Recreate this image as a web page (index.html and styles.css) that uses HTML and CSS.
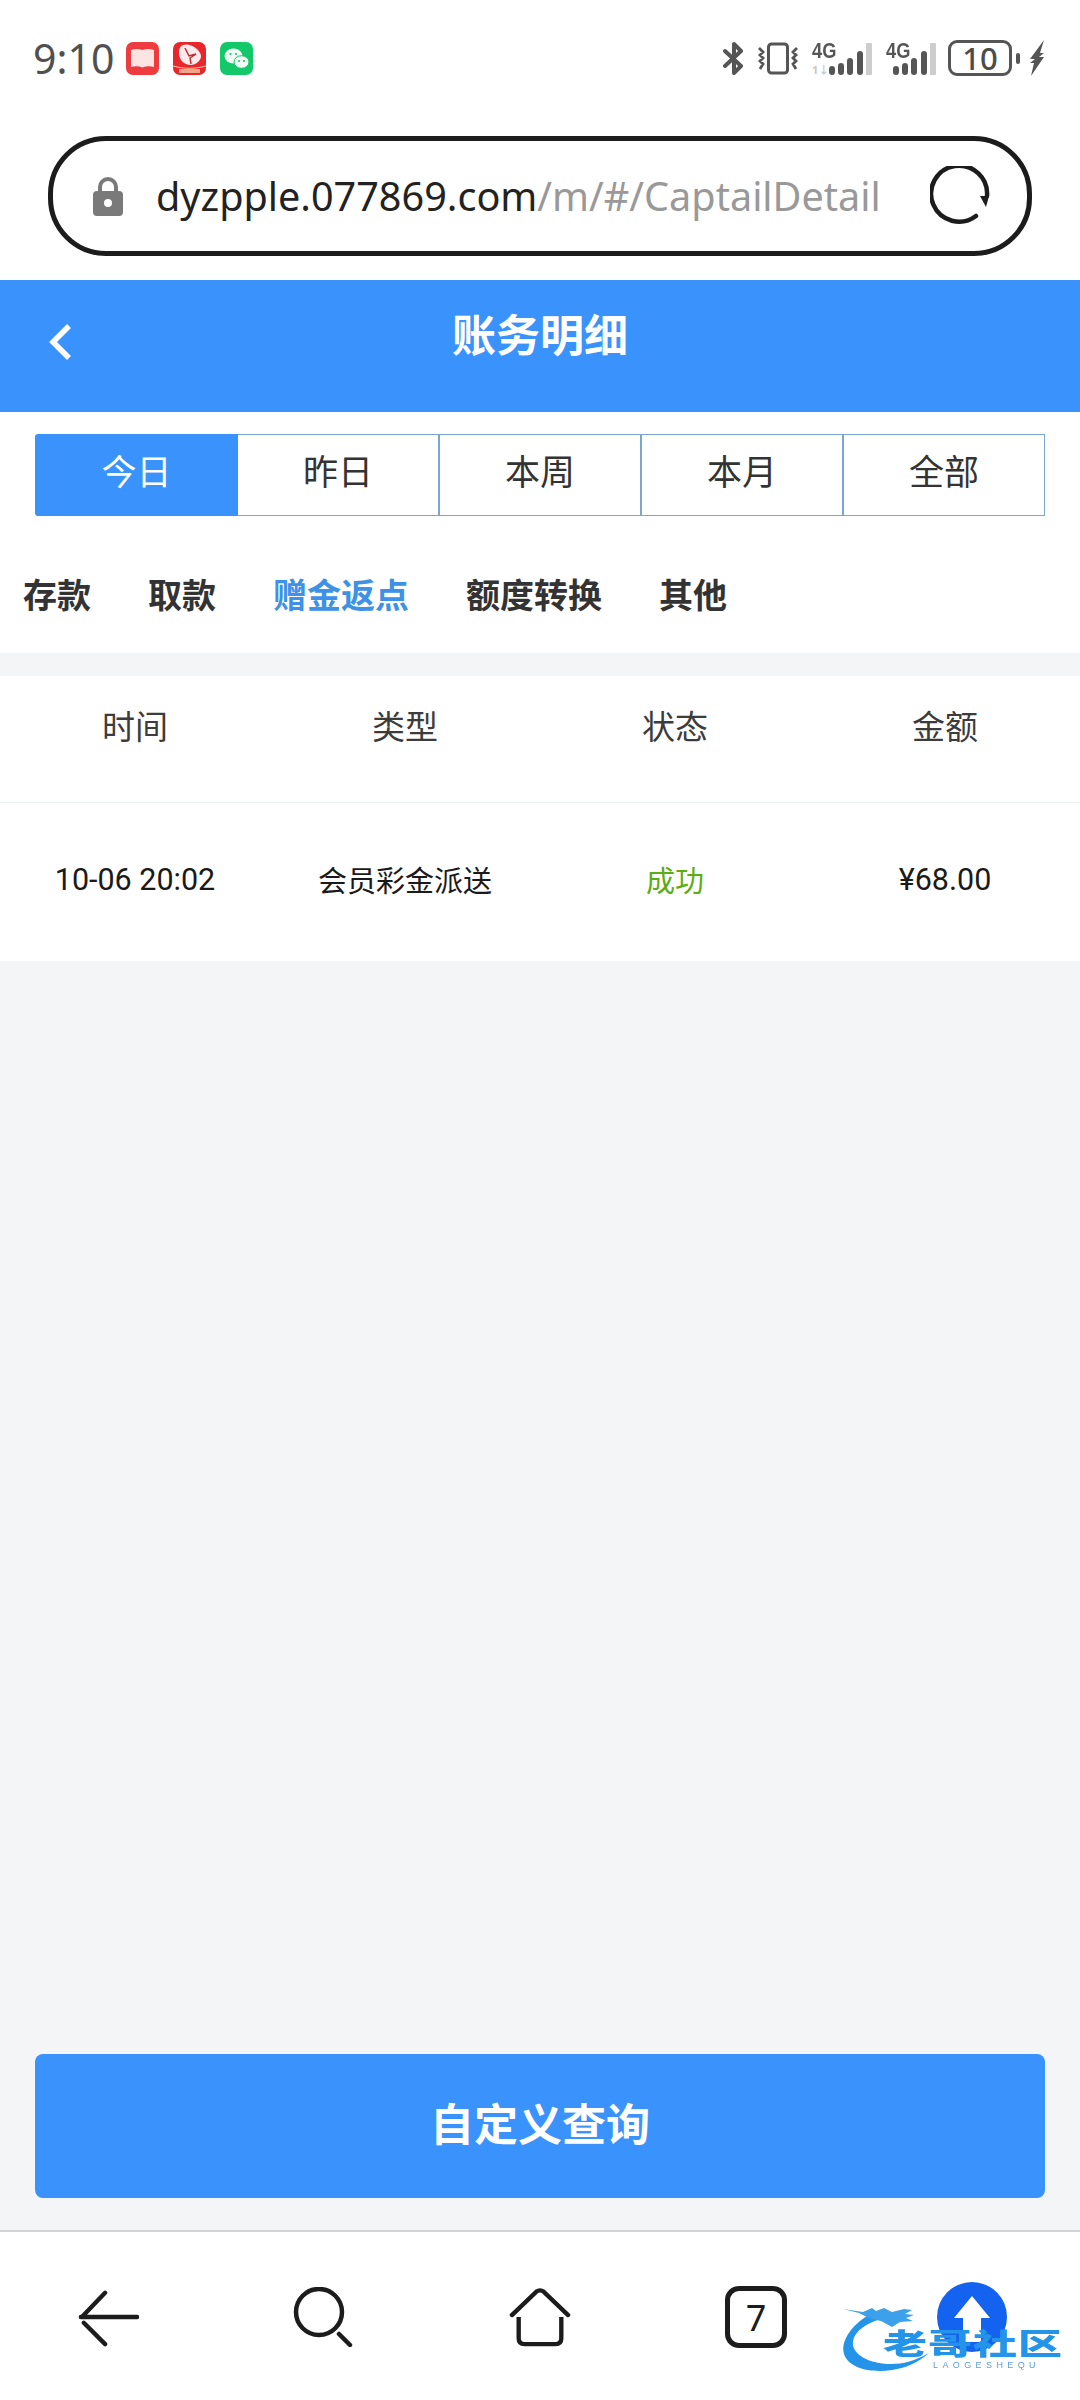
FILE: index.html
```html
<!DOCTYPE html>
<html lang="zh-Hans">
<head>
    <meta charset="UTF-8">
    <meta name="viewport" content="width=device-width, initial-scale=1.0">
    <title>账务明细</title>
    <link rel="stylesheet" href="styles.css">
</head>
<body>
    <div class="phone">
        <!-- 状态栏 -->
        <div class="statusbar">
            <div class="status-left">
                <span class="clock">9:10</span>
                <svg class="app-icon" viewBox="0 0 33 33">
                    <rect width="33" height="33" rx="7" fill="#ee3b3f"/>
                    <path d="M5 8c4-1.500 8-1.500 11.500 0 3.500-1.500 7.500-1.500 11.500 0v17c-4-1-8-1-11.500 .5C13 24 9 24 5 25z" fill="#fbe4e2"/>
                </svg>
                <svg class="app-icon" viewBox="0 0 33 33">
                    <rect width="33" height="33" rx="7" fill="#e8262c"/>
                    <path d="M10 3c6-2 14 2 17 8 2 3 1 6-2 9-3 3-8 4-12 2-5-2-7-7-7-11 0-4 1-7 4-8z" fill="#fbeaea"/>
                    <path d="M12 6l4 8 7-2-6 4 1 6" fill="none" stroke="#c8202c" stroke-width="1.400"/>
                    <path d="M0 24c11 3 22 3 33 0" fill="none" stroke="#f8c9a0" stroke-width="1"/>
                    <rect x="6" y="27" width="21" height="4" fill="#f3a58a"/>
                </svg>
                <svg class="app-icon" viewBox="0 0 33 33">
                    <rect width="33" height="33" rx="7" fill="#12c868"/>
                    <ellipse cx="13.500" cy="14" rx="9" ry="7.500" fill="#f2fbf5"/>
                    <ellipse cx="21.500" cy="20" rx="7.500" ry="6.300" fill="#f2fbf5" stroke="#12c868" stroke-width="1"/>
                    <circle cx="10.500" cy="12" r="1.100" fill="#12c868"/>
                    <circle cx="16" cy="12" r="1.100" fill="#12c868"/>
                    <circle cx="19" cy="19" r="1" fill="#12c868"/>
                    <circle cx="24" cy="19" r="1" fill="#12c868"/>
                </svg>
            </div>
            <div class="status-right">
                <svg class="ic-bt" viewBox="0 0 21 33">
                    <path d="M2 9l16 15-7 7V2l7 7L2 24" fill="none" stroke="#555" stroke-width="4" stroke-linejoin="round" stroke-linecap="round"/>
                </svg>
                <svg class="ic-vibrate" viewBox="0 0 40 33">
                    <rect x="10.500" y="2" width="19" height="29" rx="3" fill="none" stroke="#555" stroke-width="3"/>
                    <path d="M1 6l4 4-3 3 3 3-3 3 3 3-3 5M39 6l-4 4 3 3-3 3 3 3-3 3 3 5" fill="none" stroke="#555" stroke-width="2.800"/>
                </svg>
                <div class="signal signal-wide">
                    <span class="net">4G</span>
                    <span class="updown">1↓</span>
                    <i class="b b1"></i><i class="b b2"></i><i class="b b3"></i><i class="b b4"></i><i class="b b5"></i>
                </div>
                <div class="signal">
                    <span class="net">4G</span>
                    <i class="b b1"></i><i class="b b2"></i><i class="b b3"></i><i class="b b4"></i><i class="b b5"></i>
                </div>
                <div class="battery"><span>10</span></div>
                <i class="battery-tip"></i>
                <svg class="ic-bolt" viewBox="0 0 16 36">
                    <path d="M15 0L1 19h5l-5 4h4L2 36 15 17h-5l5-4h-4z" fill="#555"/>
                </svg>
            </div>
        </div>

        <!-- 地址栏 -->
        <div class="urlwrap">
            <div class="urlbar">
                <svg class="ic-lock" viewBox="0 0 30 40">
                    <path d="M7 18v-7a8 8 0 0 1 16 0v7" fill="none" stroke="#7a7a7a" stroke-width="4"/>
                    <rect y="15" width="30" height="25" rx="4" fill="#7a7a7a"/>
                    <circle cx="15" cy="27" r="4" fill="#fff"/>
                </svg>
                <div class="url"><span class="host">dyzpple.077869.com</span><span class="path">/m/#/CaptailDetail</span></div>
                <svg class="ic-reload" viewBox="0 0 60 60">
                    <path d="M46 50A28 28 0 1 1 57 30" fill="none" stroke="#1c1c1c" stroke-width="4.500" stroke-linecap="round"/>
                    <path d="M50 30h9l-3 11z" fill="#1c1c1c"/>
                </svg>
            </div>
        </div>

        <!-- 标题 -->
        <header class="topbar">
            <svg class="ic-back" viewBox="0 0 26 40">
                <path d="M21 4L5 20l16 16" fill="none" stroke="#fff" stroke-width="5.500"/>
            </svg>
            <h1>账务明细</h1>
        </header>

        <div class="ranges">
            <div class="range active">今日</div>
            <div class="range">昨日</div>
            <div class="range">本周</div>
            <div class="range">本月</div>
            <div class="range">全部</div>
        </div>

        <div class="cats">
            <span class="cat">存款</span>
            <span class="cat">取款</span>
            <span class="cat on">赠金返点</span>
            <span class="cat">额度转换</span>
            <span class="cat">其他</span>
        </div>

        <div class="content">
            <div class="row head">
                <div>时间</div>
                <div>类型</div>
                <div>状态</div>
                <div>金额</div>
            </div>
            <div class="row item">
                <div class="num">10-06 20:02</div>
                <div>会员彩金派送</div>
                <div class="ok">成功</div>
                <div class="num">¥68.00</div>
            </div>
            <div class="spacer"></div>
            <button class="query">自定义查询</button>
        </div>

        <!-- 浏览器底栏 -->
        <nav class="toolbar">
            <svg class="tool" viewBox="0 0 64 60">
                <path d="M4 30h58M29 5L5 30M7 36l22 22" fill="none" stroke="#1c1c1c" stroke-width="4.500" stroke-linecap="round"/>
            </svg>
            <svg class="tool" viewBox="0 0 60 60">
                <circle cx="25" cy="25" r="23" fill="none" stroke="#1c1c1c" stroke-width="4.500"/>
                <path d="M45 47l11 11" fill="none" stroke="#1c1c1c" stroke-width="4.500" stroke-linecap="round"/>
            </svg>
            <svg class="tool" viewBox="0 0 64 60">
                <path d="M3 28L28 4q4-3 8 0l25 24" fill="none" stroke="#1c1c1c" stroke-width="4.500" stroke-linecap="round"/>
                <path d="M10 30v22q0 6 6 6h32q6 0 6-6V30" fill="none" stroke="#1c1c1c" stroke-width="4.500"/>
            </svg>
            <div class="tabs-count">7</div>
            <div class="tool-empty"></div>
        </nav>

        <!-- 水印和回到顶部 -->
        <div class="totop">
            <svg viewBox="0 0 70 70">
                <circle cx="35" cy="35" r="35" fill="#1463f0"/>
                <path d="M35 14L53 36H44V60H26V36H17z" fill="#fff"/>
            </svg>
        </div>
        <div class="mark">
            <svg class="dragon" viewBox="0 0 90 65">
                <path d="M28 7C10 16-3 34 1 47c5 15 28 19 48 16 13-2 26-7 37-17-14 8-26 11-38 11C30 57 12 50 10 38 9 27 20 17 38 12z" fill="#2394e8"/>
                <path d="M0 2l20 3 9-4 4 3 8-3 8 4 12-3 8 1-7 4 9 1-8 3 7 3-13 1-8 5-11-6-10-2-12-6z" fill="#3ca0ea"/>
            </svg>
            <div class="mark-text">老哥社区</div>
            <div class="mark-sub">LAOGESHEQU</div>
        </div>
    </div>
</body>
</html>
```

FILE: styles.css
```css
* {
    box-sizing: border-box;
    margin: 0;
    padding: 0;
}
body {
    font-family: "Noto Sans", "Noto Sans CJK SC", sans-serif;
    background: #fff;
}
.phone {
    position: relative;
    width: 1080px;
    height: 2400px;
    display: flex;
    flex-direction: column;
    overflow: hidden;
    background: #fff;
}

/* status bar */
.statusbar {
    height: 116px;
    padding: 0 35px 0 33px;
    display: flex;
    justify-content: space-between;
    align-items: center;
}
.status-left, .status-right {
    display: flex;
    align-items: center;
}
.clock {
    font-size: 41px;
    color: #505050;
    margin-right: 12px;
}
.app-icon {
    width: 33px;
    height: 33px;
    margin-right: 14px;
}
.ic-bt {
    width: 21px;
    height: 33px;
    margin-right: 14px;
}
.ic-vibrate {
    width: 40px;
    height: 33px;
    margin-right: 14px;
}
.signal {
    position: relative;
    width: 50px;
    height: 33px;
    margin-right: 12px;
}
.signal-wide {
    width: 60px;
    margin-right: 14px;
}
.net {
    position: absolute;
    left: 0;
    top: -2px;
    font-family: "Liberation Sans", sans-serif;
    font-weight: bold;
    font-size: 22px;
    line-height: 22px;
    color: #555;
    transform: scaleX(0.83);
    transform-origin: left center;
}
.updown {
    position: absolute;
    left: 0;
    bottom: 0;
    font-size: 11px;
    line-height: 11px;
    font-weight: bold;
    color: #c8c8c8;
}
.b {
    position: absolute;
    bottom: 0;
    width: 6px;
    border-radius: 3px;
    background: #555;
}
.b1 { right: 37px; height: 9px; }
.b2 { right: 28px; height: 12px; }
.b3 { right: 19px; height: 17px; }
.b4 { right: 9px; height: 24px; }
.b5 { right: 0; height: 32px; background: #cdcdcd; border-radius: 1px; }
.battery {
    width: 64px;
    height: 36px;
    border: 3px solid #555;
    border-radius: 9px;
    display: flex;
    align-items: center;
    justify-content: center;
    font-size: 31px;
    font-weight: 500;
    color: #4c4c4c;
}
.battery-tip {
    width: 4px;
    height: 11px;
    margin: 0 9px 0 4px;
    border-radius: 2px;
    background: #555;
}
.ic-bolt {
    width: 16px;
    height: 36px;
}

/* url bar */
.urlwrap {
    padding: 20px 48px 16px;
    height: 164px;
}
.urlbar {
    height: 120px;
    border: 5px solid #1c1c1c;
    border-radius: 58px;
    display: flex;
    align-items: center;
    padding: 0 37px 0 40px;
}
.ic-lock {
    width: 30px;
    height: 40px;
    margin-right: 33px;
}
.url {
    flex: 1;
    font-size: 39.600px;
    white-space: nowrap;
}
.host {
    color: #222;
}
.path {
    color: #999;
}
.ic-reload {
    width: 60px;
    height: 60px;
}

/* blue title */
.topbar {
    position: relative;
    height: 132px;
    background: #3a92fc;
    display: flex;
    align-items: center;
    justify-content: center;
    color: #fff;
}
.topbar h1 {
    font-size: 44px;
    font-weight: 700;
    margin-top: -26px;
}
.ic-back {
    position: absolute;
    left: 48px;
    top: 42px;
    width: 26px;
    height: 40px;
}

.ranges {
    margin: 22px 35px 0;
    height: 82px;
    display: flex;
}
.range {
    width: 202px;
    padding-bottom: 12px;
    display: flex;
    align-items: center;
    justify-content: center;
    font-size: 35px;
    color: #333;
    border: 1px solid #7ba6d4;
    border-left: none;
    border-right-width: 2px;
}
.range:last-child {
    width: 201px;
    border-right-width: 1px;
}
.range.active {
    width: 203px;
    background: #3a92fc;
    color: #fff;
    border: none;
    border-radius: 3px 0 0 3px;
}

.cats {
    height: 137px;
    padding: 18px 23px 0;
    display: flex;
    align-items: center;
    gap: 57px;
}
.cat {
    font-size: 34px;
    font-weight: 700;
    color: #333;
}
.cat.on {
    color: #3d91e6;
}

.content {
    flex: 1;
    display: flex;
    flex-direction: column;
    padding-top: 23px;
    background: #f4f5f7;
}
.row {
    display: grid;
    grid-template-columns: repeat(4, 1fr);
    align-items: center;
    text-align: center;
    background: #fff;
}
.row.head {
    height: 127px;
    padding-bottom: 28px;
    font-size: 33px;
    color: #3c3c3c;
    border-bottom: 1px solid #f1f2f4;
}
.row.item {
    height: 158px;
    padding-bottom: 6px;
    font-size: 29px;
    color: #1a1a1a;
}
.num {
    font-family: Roboto, sans-serif;
    font-size: 30.500px;
}
.ok {
    color: #5cac12;
}
.spacer {
    flex: 1;
}
.query {
    margin: 0 35px 32px;
    height: 144px;
    padding-bottom: 8px;
    border: none;
    border-radius: 8px;
    background: #3a92fc;
    color: #fff;
    font-family: inherit;
    font-size: 44px;
    font-weight: 700;
}

/* browser toolbar */
.toolbar {
    height: 170px;
    padding-top: 2px;
    border-top: 2px solid #d4d4d4;
    display: grid;
    grid-template-columns: repeat(5, 216px);
    align-items: center;
    justify-items: center;
}
.tool {
    width: 62px;
    height: 60px;
}
.tabs-count {
    width: 62px;
    height: 62px;
    border: 5px solid #1c1c1c;
    border-radius: 14px;
    display: flex;
    align-items: center;
    justify-content: center;
    font-size: 36px;
    color: #1c1c1c;
}

/* floating things over the toolbar */
.totop {
    position: absolute;
    left: 937px;
    top: 2282px;
    width: 70px;
    height: 70px;
}
.mark {
    position: absolute;
    left: 843px;
    top: 2307px;
    width: 237px;
    height: 65px;
    filter: blur(0.5px);
}
.dragon {
    position: absolute;
    left: 0;
    top: 0;
    width: 90px;
    height: 65px;
}
.mark-text {
    position: absolute;
    left: 40px;
    top: 18px;
    width: 182px;
    font-family: "Noto Sans CJK SC", sans-serif;
    font-size: 44px;
    line-height: 34px;
    font-weight: 900;
    letter-spacing: 1px;
    white-space: nowrap;
    color: #2394e8;
    transform: scaleY(0.66);
}
.mark-sub {
    position: absolute;
    left: 90px;
    top: 54px;
    font-family: "Liberation Sans", sans-serif;
    font-size: 9px;
    line-height: 9px;
    letter-spacing: 4.400px;
    color: #5a9edc;
}
```
